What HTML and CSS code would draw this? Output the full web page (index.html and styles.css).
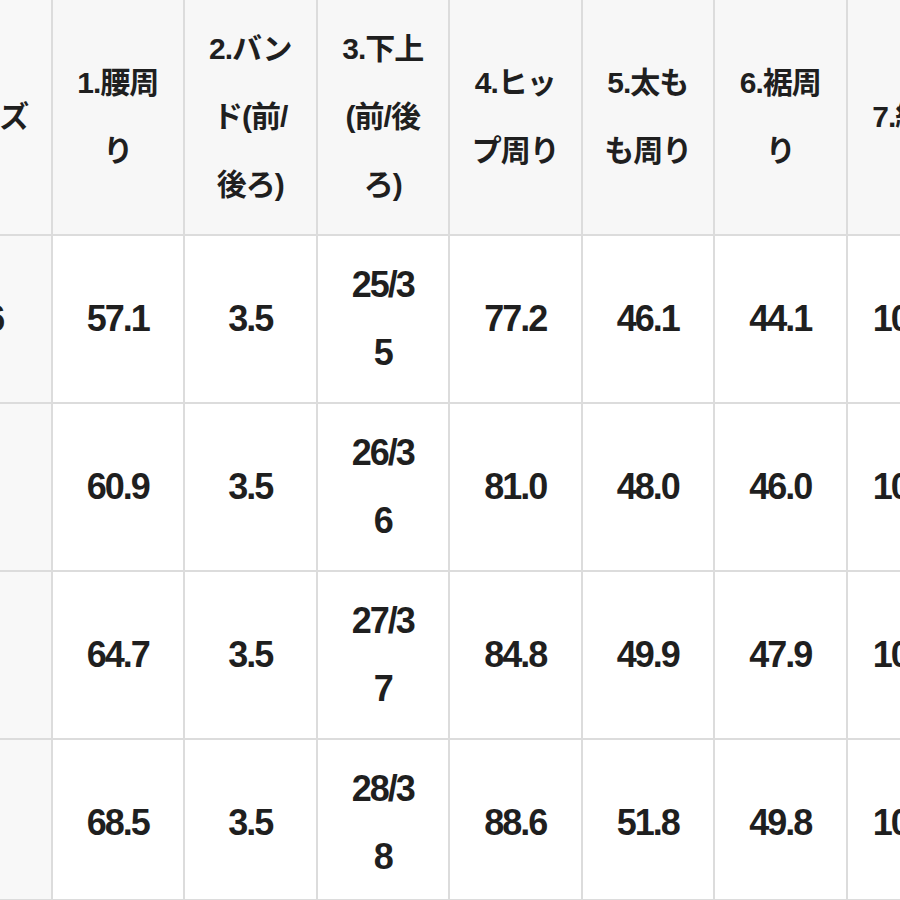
FILE: index.html
```html
<!DOCTYPE html>
<html lang="ja">
<head>
<meta charset="utf-8">
<title>サイズ表</title>
<link rel="stylesheet" href="styles.css">
</head>
<body>
<table class="size-table">
  <thead>
    <tr>
      <th class="size">サイズ</th>
      <th>1.腰周り</th>
      <th>2.バンド(前/後ろ)</th>
      <th>3.下上(前/後ろ)</th>
      <th>4.ヒップ周り</th>
      <th>5.太もも周り</th>
      <th>6.裾周り</th>
      <th>7.総丈</th>
    </tr>
  </thead>
  <tbody>
    <tr>
      <td class="size">36</td>
      <td>57.1</td>
      <td>3.5</td>
      <td>25/3<br>5</td>
      <td>77.2</td>
      <td>46.1</td>
      <td>44.1</td>
      <td>100.5</td>
    </tr>
    <tr>
      <td class="size">S</td>
      <td>60.9</td>
      <td>3.5</td>
      <td>26/3<br>6</td>
      <td>81.0</td>
      <td>48.0</td>
      <td>46.0</td>
      <td>101.5</td>
    </tr>
    <tr>
      <td class="size">M</td>
      <td>64.7</td>
      <td>3.5</td>
      <td>27/3<br>7</td>
      <td>84.8</td>
      <td>49.9</td>
      <td>47.9</td>
      <td>102.5</td>
    </tr>
    <tr>
      <td class="size">L</td>
      <td>68.5</td>
      <td>3.5</td>
      <td>28/3<br>8</td>
      <td>88.6</td>
      <td>51.8</td>
      <td>49.8</td>
      <td>103.5</td>
    </tr>
  </tbody>
</table>
</body>
</html>
```

FILE: styles.css
```css
html, body {
  margin: 0;
  padding: 0;
  overflow: hidden;
  background: #ffffff;
}

body {
  width: 900px;
  height: 900px;
}

.size-table {
  border-collapse: collapse;
  table-layout: fixed;
  width: 1060px;
  margin-left: -82px;
  margin-top: -2px;
  font-family: "Liberation Sans", "Noto Sans CJK JP", sans-serif;
  font-weight: 700;
  color: #1f1f1f;
}

.size-table th,
.size-table td {
  width: 132.5px;
  box-sizing: border-box;
  border: 2px solid #dcdcdc;
  padding: 15px 21px;
  text-align: center;
  vertical-align: middle;
  line-height: 68px;
  word-break: break-all;
}

.size-table th {
  background: #f7f7f7;
  font-size: 30px;
  letter-spacing: -1px;
  font-weight: 700;
}

.size-table td {
  background: #ffffff;
  font-size: 36px;
  letter-spacing: -2px;
}

.size-table .size {
  background: #f8f8f8;
  white-space: nowrap;
}

.size-table tbody tr:last-child td {
  padding-bottom: 8px;
}
```
